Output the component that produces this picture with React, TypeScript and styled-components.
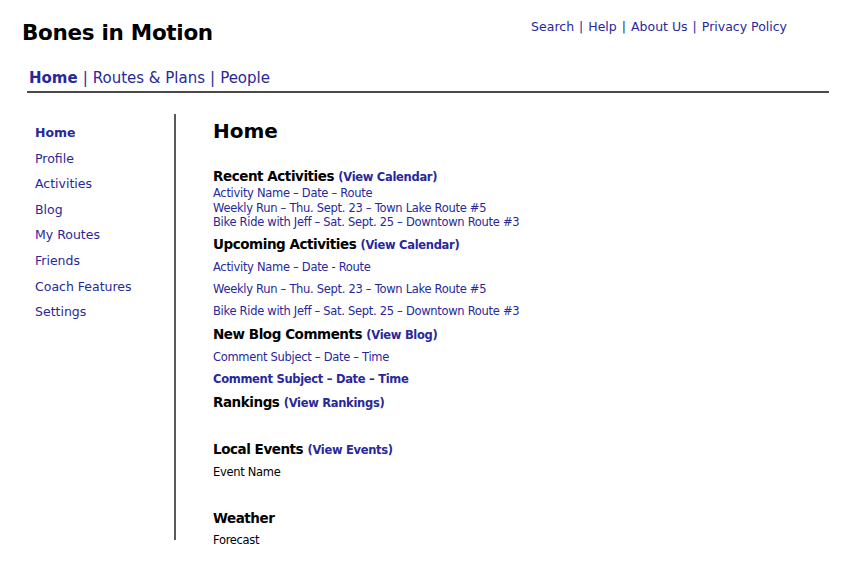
import styled, { createGlobalStyle } from 'styled-components'

const GlobalStyle = createGlobalStyle`
  *, *::before, *::after {
    box-sizing: border-box;
  }
  html, body {
    margin: 0;
    padding: 0;
    background: #ffffff;
  }
  body {
    font-family: "DejaVu Sans", Verdana, sans-serif;
    color: #000000;
  }
`

const BLUE = '#28289a'

const Page = styled.div`
  width: 848px;
  height: 568px;
  overflow: hidden;
`

const Header = styled.header`
  display: flex;
  justify-content: space-between;
  align-items: flex-start;
  height: 46px;
  padding: 19px 61px 0 22px;
`

const Title = styled.h1`
  margin: 1px 0 0;
  font-size: 21.5px;
  line-height: 26px;
  font-weight: bold;
  letter-spacing: -0.3px;
`

const Utility = styled.nav`
  font-size: 12.5px;
  line-height: 16px;
  color: ${BLUE};
`

const Link = styled.a<{ $bold?: boolean }>`
  color: ${BLUE};
  text-decoration: none;
  font-weight: ${p => (p.$bold ? 'bold' : 'normal')};
`

const Sep = styled.span`
  margin: 0 5px;
`

const TabBar = styled.nav`
  margin: 23px 19px 0 27px;
  padding: 0 0 4px 2px;
  border-bottom: 2px solid #4a4a4a;
  font-size: 15px;
  line-height: 18px;
  color: ${BLUE};
`

const Body = styled.div`
  display: flex;
  margin-top: 21px;
`

const Sidebar = styled.aside`
  width: 141px;
  height: 426px;
  margin-left: 35px;
  padding-top: 6px;
  border-right: 2px solid #5a5a5a;
`

const SideList = styled.ul`
  list-style: none;
  margin: 0;
  padding: 0;
  font-size: 12.5px;
`

const SideItem = styled.li`
  height: 25.6px;
  line-height: 25.6px;
`

const Main = styled.main`
  flex: 1;
  padding: 5px 0 0 37px;
`

const PageTitle = styled.h2`
  margin: 0 0 24px;
  font-size: 20px;
  line-height: 24px;
  font-weight: bold;
`

const Section = styled.section<{ $gap?: number }>`
  margin-bottom: ${p => p.$gap ?? 0}px;
`

const SectionHead = styled.h3<{ $tight?: boolean }>`
  margin: 0 0 ${p => (p.$tight ? 0 : 2)}px;
  font-size: 13.5px;
  line-height: 18px;
  font-weight: bold;
  letter-spacing: -0.45px;
`

const HeadLink = styled.a`
  color: ${BLUE};
  text-decoration: none;
  font-size: 11.5px;
  letter-spacing: -0.3px;
`

const Item = styled.div<{ $spaced?: boolean; $bold?: boolean; $plain?: boolean }>`
  font-size: 11.5px;
  letter-spacing: -0.3px;
  line-height: ${p => (p.$spaced ? '22px' : '14.5px')};
  color: ${p => (p.$plain ? '#000000' : BLUE)};
  font-weight: ${p => (p.$bold ? 'bold' : 'normal')};
`

const sideLinks = ['Home', 'Profile', 'Activities', 'Blog', 'My Routes', 'Friends', 'Coach Features', 'Settings']

export default function App() {
  return (
    <Page>
      <GlobalStyle />
      <Header>
        <Title>Bones in Motion</Title>
        <Utility>
          <Link href="#">Search</Link><Sep>|</Sep>
          <Link href="#">Help</Link><Sep>|</Sep>
          <Link href="#">About Us</Link><Sep>|</Sep>
          <Link href="#">Privacy Policy</Link>
        </Utility>
      </Header>
      <TabBar>
        <Link href="#" $bold>Home</Link><Sep>|</Sep>
        <Link href="#">Routes &amp; Plans</Link><Sep>|</Sep>
        <Link href="#">People</Link>
      </TabBar>
      <Body>
        <Sidebar>
          <SideList>
            {sideLinks.map((s, i) => (
              <SideItem key={s}>
                <Link href="#" $bold={i === 0}>{s}</Link>
              </SideItem>
            ))}
          </SideList>
        </Sidebar>
        <Main>
          <PageTitle>Home</PageTitle>
          <Section $gap={5.5}>
            <SectionHead $tight>Recent Activities <HeadLink href="#">(View Calendar)</HeadLink></SectionHead>
            <Item>Activity Name – Date – Route</Item>
            <Item>Weekly Run – Thu. Sept. 23 – Town Lake Route #5</Item>
            <Item>Bike Ride with Jeff – Sat. Sept. 25 – Downtown Route #3</Item>
          </Section>
          <Section $gap={3}>
            <SectionHead>Upcoming Activities <HeadLink href="#">(View Calendar)</HeadLink></SectionHead>
            <Item $spaced>Activity Name – Date - Route</Item>
            <Item $spaced>Weekly Run – Thu. Sept. 23 – Town Lake Route #5</Item>
            <Item $spaced>Bike Ride with Jeff – Sat. Sept. 25 – Downtown Route #3</Item>
          </Section>
          <Section $gap={3}>
            <SectionHead>New Blog Comments <HeadLink href="#">(View Blog)</HeadLink></SectionHead>
            <Item $spaced>Comment Subject – Date – Time</Item>
            <Item $spaced $bold>Comment Subject – Date – Time</Item>
          </Section>
          <Section $gap={28}>
            <SectionHead $tight>Rankings <HeadLink href="#">(View Rankings)</HeadLink></SectionHead>
          </Section>
          <Section $gap={26}>
            <SectionHead>Local Events <HeadLink href="#">(View Events)</HeadLink></SectionHead>
            <Item $spaced $plain>Event Name</Item>
          </Section>
          <Section>
            <SectionHead>Weather</SectionHead>
            <Item $spaced $plain>Forecast</Item>
          </Section>
        </Main>
      </Body>
    </Page>
  )
}
